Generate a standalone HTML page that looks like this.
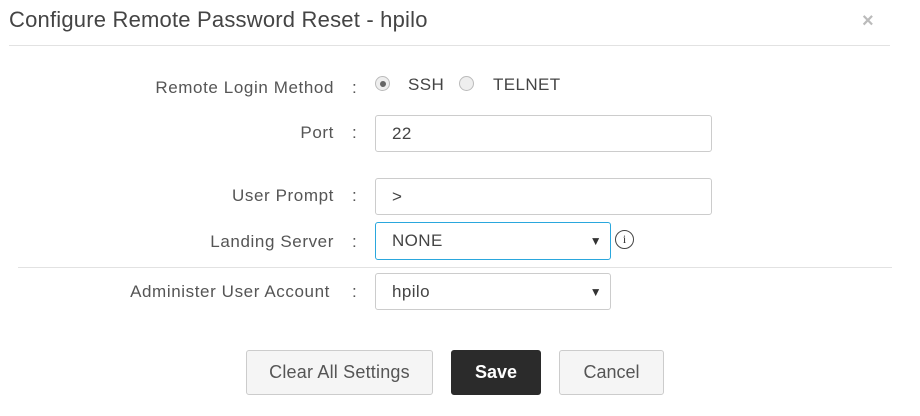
<!DOCTYPE html>
<html><head><style>
body{margin:0;width:920px;height:416px;background:#fff;font-family:"Liberation Sans",sans-serif;color:#555;position:relative;overflow:hidden}
.a{position:absolute}
.t{left:9px;top:7px;font-size:22px;color:#444;letter-spacing:0.2px}
.x{left:862px;top:10px;font-size:20px;color:#bbb;font-weight:bold}
.hr{height:1px;background:#e2e2e2}
.l{width:334px;left:0;text-align:right;font-size:17px;letter-spacing:0.6px}
.c{left:352px;font-size:17px}
.in{border:1px solid #ccc;border-radius:3px;box-sizing:border-box;font-size:17px;padding-left:16px;display:flex;align-items:center;color:#444;letter-spacing:0.4px}
.ar{position:absolute;right:8px;font-size:12px;color:#333}
.r{width:15px;height:15px;border-radius:50%;border:1px solid #bbb;box-sizing:border-box;background:#eee}
.b{border:1px solid #ccc;border-radius:3px;box-sizing:border-box;background:#f5f5f5;font-size:18px;display:flex;align-items:center;justify-content:center;color:#555;height:45px;top:350px}
</style></head><body>
<div class="a t">Configure Remote Password Reset - hpilo</div>
<div class="a x">×</div>
<div class="a hr" style="left:9px;top:45px;width:881px"></div>

<div class="a l" style="top:78px">Remote Login Method</div><div class="a c" style="top:78px">:</div>
<div class="a r" style="left:375px;top:76px;display:flex;align-items:center;justify-content:center"><div style="width:6px;height:6px;border-radius:50%;background:#666"></div></div>
<div class="a" style="left:408px;top:75px;font-size:17px;color:#444;letter-spacing:0.4px">SSH</div>
<div class="a r" style="left:459px;top:76px"></div>
<div class="a" style="left:493px;top:75px;font-size:17px;color:#444;letter-spacing:0.4px">TELNET</div>

<div class="a l" style="top:123px">Port</div><div class="a c" style="top:123px">:</div>
<div class="a in" style="left:375px;top:115px;width:337px;height:37px">22</div>

<div class="a l" style="top:186px">User Prompt</div><div class="a c" style="top:186px">:</div>
<div class="a in" style="left:375px;top:178px;width:337px;height:37px">&gt;</div>

<div class="a l" style="top:232px">Landing Server</div><div class="a c" style="top:232px">:</div>
<div class="a in" style="left:375px;top:222px;width:236px;height:38px;border-color:#2aa7dd">NONE<span class="ar">▼</span></div>
<div class="a" style="left:615px;top:230px;width:19px;height:19px;border:1.5px solid #444;border-radius:50%;box-sizing:border-box;font-size:12px;text-align:center;line-height:16px;color:#333;font-family:'Liberation Serif',serif">i</div>

<div class="a hr" style="left:18px;top:267px;width:874px"></div>

<div class="a l" style="top:282px;width:330px">Administer User Account</div><div class="a c" style="top:282px">:</div>
<div class="a in" style="left:375px;top:273px;width:236px;height:37px">hpilo<span class="ar">▼</span></div>

<div class="a b" style="left:246px;width:187px;letter-spacing:0.2px">Clear All Settings</div>
<div class="a b" style="left:451px;width:90px;background:#2b2b2b;border-color:#2b2b2b;color:#fff;font-weight:bold">Save</div>
<div class="a b" style="left:559px;width:105px">Cancel</div>
</body></html>
